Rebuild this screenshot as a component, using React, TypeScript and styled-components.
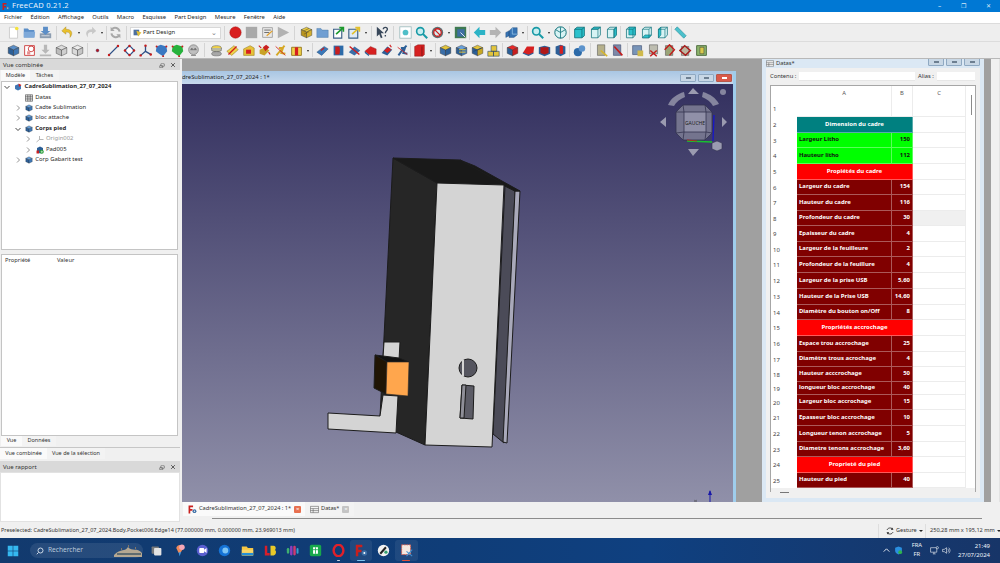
import React from "react";
import styled, { createGlobalStyle } from "styled-components";

const Global = createGlobalStyle`
  html, body { margin: 0; padding: 0; background: #f0f0f0; overflow: hidden; }
  * { box-sizing: border-box; }
  #root { width: 1000px; height: 563px; font-family: "Noto Sans", "Open Sans", sans-serif; }
`;

const Page = styled.div`
  width: 1000px; height: 563px; display: flex; flex-direction: column; overflow: hidden;
  background: #f0f0f0; color: #222; font-size: 6.4px; line-height: 1;
`;
const TitleBar = styled.div`
  height: 12px; background: #0078d4; color: #e8f2fb; display: flex; align-items: center; padding-left: 2px;
  font-size: 7.6px; letter-spacing: .2px; gap: 2px;
`;
const TitleLogo = styled.div`
  width: 8px; height: 9px; flex: none;
  svg { width: 8px; height: 9px; display: block; }
`;
const WinButtons = styled.div`
  margin-left: auto; display: flex; color: #d5e8f7; width: 62px; justify-content: space-between; padding-right: 9px;
  align-items: center; font-size: 6.4px;
`;
const MenuBar = styled.div`
  height: 11px; background: #fff; display: flex; align-items: center; gap: 8.4px; padding-left: 4px; font-size: 5.85px; color: #1e1e1e;
`;
const ToolRow = styled.div<{ $bottom?: boolean }>`
  height: 18px; display: flex; align-items: center; padding-left: 5px; background: #eeeeee;
  border-top: 1px solid #dcdcdc; ${p => p.$bottom ? "border-bottom: 1px solid #b8b8b8;" : ""}
`;
const ToolSlot = styled.div`
  width: 16px; height: 16px; display: flex; align-items: center; justify-content: center; flex: none;
  svg { width: 13px; height: 13px; display: block; }
`;
const ToolSep = styled.div<{ $w: number }>`
  width: ${p => p.$w}px; height: 14px; flex: none; display: flex; justify-content: center;
  &::after { content: ""; width: 1px; height: 100%; background: #d4d4d4; }
`;
const ToolArrow = styled.div`
  width: 7px; flex: none; display: flex; justify-content: center;
  &::after { content: ""; border: 1.8px solid transparent; border-top: 2.2px solid #222; margin-top: 2px; }
`;
const Combo = styled.div`
  width: 91px; height: 12px; flex: none; background: #fff; border: 1px solid #d8d8d8; display: flex; align-items: center;
  padding: 0 3px 0 2px; gap: 1px; font-size: 5.9px; color: #222;
  svg { width: 9px; height: 9px; }
  span:last-child { margin-left: auto; color: #777; font-size: 7px; }
`;
const Main = styled.div`
  height: 465px; display: flex;
`;
const Dock = styled.div`
  width: 182px; flex: none; display: flex; flex-direction: column; padding-right: 2px; background: #f0f0f0;
`;
const DockHeader = styled.div`
  height: 11px; flex: none; background: #d9d9d9; display: flex; align-items: center; justify-content: space-between; padding: 0 3px 0 3px;
  font-size: 6px; color: #333;
  svg { width: 6px; height: 6px; }
`;
const HeaderTools = styled.div`
  display: flex; gap: 5px; align-items: center; padding-right: 1px;
`;
const TabStrip = styled.div<{ $h: number; $mt?: number; $line?: boolean }>`
  height: ${p => p.$h}px; flex: none; display: flex; padding-left: ${p => p.$line ? 0 : 1}px; margin-top: ${p => p.$mt ?? 0}px;
  ${p => p.$line ? "border-top: 1px solid #c6c6c6;" : ""}
`;
const DockTab = styled.div<{ $w: number; $active?: boolean }>`
  width: ${p => p.$w}px; display: flex; align-items: center; justify-content: center; font-size: 5.5px; color: #333;
  background: ${p => p.$active ? "#fafafa" : "#f3f3f3"};
`;
const TreeBox = styled.div`
  height: 169px; flex: none; margin: 0 2px 0 1px; background: #fff; border: 1px solid #c4c4c4;
`;
const TreeRow = styled.div<{ $level: number; $strong?: boolean; $dim?: boolean }>`
  height: 10.4px; display: flex; align-items: center; padding-left: ${p => 1 + p.$level * 10.7}px; font-size: 5.9px; gap: 2.3px;
  font-weight: ${p => p.$strong ? 700 : 400}; color: ${p => p.$dim ? "#999" : "#2a2a2a"};
  svg { width: 8px; height: 8px; flex: none; }
`;
const Chevron = styled.div`
  width: 8px; height: 8px; flex: none; margin-right: 1px;
  svg { width: 8px; height: 8px; }
`;
const PropBox = styled.div`
  height: 182px; flex: none; margin: 4px 2px 0 1px; background: #fff; border: 1px solid #c4c4c4;
`;
const PropHead = styled.div`
  height: 12px; display: flex; align-items: center; font-size: 5.8px; color: #333;
  span:first-child { width: 55px; padding-left: 3px; }
`;
const ReportBox = styled.div`
  height: 50px; flex: none; background: #fff; border: 1px solid #e2e2e2;
`;
const Center = styled.div`
  flex: 1; min-width: 0; display: flex; flex-direction: column;
`;
const MdiRow = styled.div`
  height: 443px; flex: none; display: flex;
`;
const Mdi = styled.div`
  width: 809px; flex: none; background: #a0a0a0; display: flex; gap: 26px; overflow: hidden;
`;
const SideStrip = styled.div`
  flex: 1; background: #f0f0f0; border-right: 1px solid #e2e2e2;
`;
const ViewWindow = styled.div`
  width: 554px; flex: none; margin-top: 12px; display: flex; flex-direction: column; border-right: 3px solid #9fcdec; background: #b9d4ec;
`;
const ViewTitle = styled.div`
  height: 13px; flex: none; display: flex; align-items: center; font-size: 5.85px; color: #222; overflow: hidden; white-space: nowrap;
  background: linear-gradient(#a9c6e3, #c7d9ec);
`;
const ClippedName = styled.div`
  width: 100px; overflow: hidden; flex: none;
  span { display: block; margin-left: -7px; }
`;
const ViewTitleButtons = styled.div`
  margin-left: auto; display: flex; gap: 2px; padding-right: 1px;
`;
const CapButton = styled.div<{ $close?: boolean }>`
  width: 16px; height: 8px; border-radius: 1px; border: 1px solid ${p => p.$close ? "#b5574a" : "#8fa9c2"};
  background: ${p => p.$close ? "#d9594a" : "#c8d7e5"}; display: flex; align-items: center; justify-content: center;
  &::after { content: ""; width: 5px; height: 2px; background: ${p => p.$close ? "#fff" : "#6d7f91"}; }
`;
const Viewport = styled.div`
  flex: 1; min-height: 0; background: linear-gradient(#33305f, #9090a9);
  svg { display: block; width: 551px; height: 418px; }
`;
const SheetWindow = styled.div`
  width: 222px; flex: none; display: flex; flex-direction: column; background: #dbe8f4; padding: 0 4px 4px 4px;
`;
const SheetTitle = styled.div`
  height: 9px; flex: none; display: flex; align-items: center; font-size: 5.8px; gap: 2px; color: #333;
  svg { width: 8px; height: 7px; }
`;
const SheetCaps = styled.div`
  margin-left: auto; display: flex; gap: 2px; margin-top: -4px;
`;
const SheetBody = styled.div`
  flex: 1; min-height: 0; background: #f0f0f0; padding: 0 0 6px 4px; display: flex; flex-direction: column; width: 214px;
`;
const FormRow = styled.div`
  height: 17px; flex: none; display: flex; align-items: center; font-size: 5.8px; color: #333;
`;
const FormLabel = styled.div<{ $w: number; $pl?: number }>`
  width: ${p => p.$w}px; flex: none; padding-left: ${p => p.$pl ?? 0}px;
`;
const FormInput = styled.div<{ $w: number }>`
  width: ${p => p.$w}px; height: 9px; flex: none; background: #fff; border-bottom: 1px solid #e6e6e6;
`;
const Sheet = styled.div`
  flex: 1; min-height: 0; width: 206px; background: #fff; border: 1px solid #a6a6a6; position: relative; display: flex; flex-direction: column;
`;
const SheetRow = styled.div<{ $h: number }>`
  height: ${p => p.$h}px; flex: none; display: flex;
`;
const RowNum = styled.div`
  width: 26px; flex: none; display: flex; align-items: center; padding-left: 2px; font-size: 6px; color: #444; background: #fff;
`;
const ColHead = styled.div<{ $w: number }>`
  width: ${p => p.$w}px; flex: none; display: flex; align-items: center; justify-content: center; font-size: 5.8px; color: #555; border-right: 1px solid #ececec;
`;
const Cell = styled.div<{ $w: number; $bg?: string; $fg?: string; $align?: string }>`
  width: ${p => p.$w}px; flex: none; background: ${p => p.$bg ?? "#fff"}; color: ${p => p.$fg ?? "#fff"};
  display: flex; align-items: center; justify-content: ${p => p.$align ?? "flex-start"};
  padding: 0 2px; font-size: 5.95px; font-weight: 700; white-space: nowrap; overflow: hidden;
  border-right: 1px solid ${p => p.$bg ? "rgba(255,255,255,.35)" : "#ececec"};
  border-bottom: 1px solid ${p => p.$bg ? "rgba(255,255,255,.35)" : "#ececec"};
`;
const CurrentCell = styled(Cell)`
  background: #f0f0f0;
`;
const VScroll = styled.div`
  position: absolute; right: 3px; top: 9px; width: 1.5px; height: 20px; background: #8a8a8a;
`;
const HScroll = styled.div`
  margin-top: auto; height: 8px; flex: none; background: #f0f0f0; display: flex; align-items: center; padding-left: 9px;
  &::after { content: ""; width: 9px; height: 1px; background: #777; }
`;
const TabBar = styled.div`
  height: 14px; flex: none; display: flex; align-items: stretch; padding-left: 1px; background: #f0f0f0;
`;
const DocTab = styled.div<{ $w: number; $active?: boolean }>`
  width: ${p => p.$w}px; display: flex; align-items: center; gap: 2px; padding-left: 5px; font-size: 5.7px; color: #333; white-space: nowrap;
  background: ${p => p.$active ? "#fafafa" : "#f3f3f3"};
  svg { width: 9px; height: 9px; flex: none; }
`;
const TabClose = styled.div<{ $red?: boolean }>`
  width: 7px; height: 7px; flex: none; border-radius: 1px; background: ${p => p.$red ? "#e8704f" : "#c4c4c4"}; color: #fff; font-size: 6px;
  display: flex; align-items: center; justify-content: center; margin-left: 1px;
`;
const ScrollLineWrap = styled.div`
  height: 8px; flex: none; padding: 2px 18px 0 30px;
  &::after { content: ""; display: block; height: 1px; background: #8c8c8c; }
`;
const StatusBar = styled.div`
  height: 14px; flex: none; display: flex; align-items: center; padding-left: 1px; font-size: 5.45px; color: #333; white-space: nowrap;
`;
const StatusMessage = styled.div`
  width: 877px; flex: none;
`;
const StatusSection = styled.div<{ $w: number; $pl: number }>`
  width: ${p => p.$w}px; height: 100%; flex: none; display: flex; align-items: center; gap: 2px; padding-left: ${p => p.$pl}px; border-left: 1px solid #dedede;
  font-size: 5.6px;
  svg { width: 8px; height: 8px; }
  &::after { content: ""; border: 2px solid transparent; border-top: 2.4px solid #222; margin-top: 2px; }
`;
const TaskBar = styled.div`
  height: 25px; flex: none; display: flex; align-items: center; color: #fff;
  background: linear-gradient(90deg, #123a6e 0%, #0f3d78 45%, #0f4080 65%, #143a72 85%, #173568 100%);
`;
const StartSlot = styled.div`
  width: 30px; flex: none; display: flex; justify-content: center; padding-right: 4px;
  svg { width: 12px; height: 12px; }
`;
const SearchBox = styled.div`
  width: 113px; height: 15px; flex: none; border-radius: 8px; background: rgba(255,255,255,.09); display: flex; align-items: center;
  padding-left: 6px; gap: 4px; color: #b9c8da; font-size: 6.6px;
  svg:first-child { width: 8px; height: 8px; }
  svg:last-child { width: 30px; height: 13px; margin-left: auto; }
`;
const TaskSlot = styled.div<{ $active?: boolean; $dot?: string }>`
  width: 22.7px; height: 21px; flex: none; display: flex; align-items: center; justify-content: center; position: relative; border-radius: 3px;
  background: ${p => p.$active ? "rgba(255,255,255,.07)" : "transparent"};
  svg { width: 13px; height: 13px; }
  ${p => p.$dot ? `&::after { content: ""; position: absolute; bottom: 0; width: ${p.$active ? 8 : 3}px; height: 1.5px; background: ${p.$dot}; border-radius: 1px; }` : ""}
`;
const TaskIcons = styled.div`
  display: flex; margin-left: 2.5px; align-items: center;
`;
const Tray = styled.div`
  margin-left: auto; display: flex; align-items: center; padding-right: 10px; font-size: 6.2px; color: #eef3f9;
  svg { width: 9px; height: 9px; }
`;
const TrayIcons = styled.div`
  display: flex; align-items: center; gap: 3px;
`;
const Lang = styled.div`
  display: flex; flex-direction: column; align-items: center; gap: 2.5px; margin: 0 8px 0 9px; font-size: 5.8px;
`;
const Clock = styled.div`
  display: flex; flex-direction: column; align-items: flex-end; gap: 2.5px; margin-left: 7px; font-size: 6px;
`;

const Iso = ({ t, l, r, extra }: { t: string; l: string; r: string; extra?: React.ReactNode }) => (
  <svg viewBox="0 0 16 16">
    <path d="M8 1.5 14.5 4.5 8 7.5 1.5 4.5Z" fill={t} stroke="#2b2b2b" strokeWidth=".5" />
    <path d="M1.5 4.5 8 7.5V14.5L1.5 11.5Z" fill={l} stroke="#2b2b2b" strokeWidth=".5" />
    <path d="M14.5 4.5 8 7.5V14.5L14.5 11.5Z" fill={r} stroke="#2b2b2b" strokeWidth=".5" />
    {extra}
  </svg>
);
const Y = ["#f0d24a", "#c9a227", "#e6c23a"] as const;
const B = ["#5a8fc8", "#2c5f97", "#3f77b4"] as const;
const redMark = <path d="M3 13 13 3" stroke="#d01c1c" strokeWidth="1.6" />;
const cyanFace = (d: string) => (
  <svg viewBox="0 0 16 16">
    <path d="M3 4 6 1.5H14V11L11 14.5H3Z" fill="#d7f3f4" stroke="#0d6f78" strokeWidth=".9" />
    <path d={d} fill="#2cc1cc" stroke="#0d6f78" strokeWidth=".7" />
    <path d="M3 4H11V14.5M11 4 14 1.5" fill="none" stroke="#0d6f78" strokeWidth=".8" />
  </svg>
);
const Lens = ({ hue }: { hue: string }) => (
  <svg viewBox="0 0 16 16"><circle cx="6.5" cy="6.5" r="4.5" fill="#c9eef0" stroke={hue} strokeWidth="2" /><path d="M10 10 15 15" stroke={hue} strokeWidth="2.6" /></svg>
);

const icons: Record<string, React.ReactNode> = {
  doc: <svg viewBox="0 0 16 16"><path d="M3 1.5H10L13 4.5V15H3Z" fill="#fff" stroke="#c5c5c5" /><circle cx="12" cy="3" r="2.2" fill="#f4e23c" /></svg>,
  open: <svg viewBox="0 0 16 16"><path d="M1 3H6L7.5 5H14V14H1Z" fill="#5b8ec7" /><path d="M1 7H15L14 14H1Z" fill="#7ea9d9" /></svg>,
  save: <svg viewBox="0 0 16 16"><path d="M1 9H15V15H1Z" fill="#8c9db0" /><path d="M5 1H11V6H14L8 11 2 6H5Z" fill="#5b8ec7" /><path d="M3 12H13" stroke="#dce4ec" /></svg>,
  undo: <svg viewBox="0 0 16 16"><path d="M6 1 1 6 6 10V7.5C10 7.5 12 9 11 14 15 10 14 4 6 4Z" fill="#e9c02c" stroke="#a5821a" strokeWidth=".5" /></svg>,
  redo: <svg viewBox="0 0 16 16"><path d="M10 1 15 6 10 10V7.5C6 7.5 4 9 5 14 1 10 2 4 10 4Z" fill="#c8c8c8" /></svg>,
  refresh: <svg viewBox="0 0 16 16"><path d="M13 7A5.5 5.5 0 0 0 3.5 4M3 9A5.5 5.5 0 0 0 12.5 12" fill="none" stroke="#a8a8a8" strokeWidth="2.4" /><path d="M2 1V6H7ZM14 15V10H9Z" fill="#a8a8a8" /></svg>,
  rec: <svg viewBox="0 0 16 16"><circle cx="8" cy="8" r="7" fill="#d81e1e" stroke="#a51414" strokeWidth=".6" /></svg>,
  stop: <svg viewBox="0 0 16 16"><rect x="1" y="1" width="14" height="14" fill="#a9a9a9" /></svg>,
  macro: <svg viewBox="0 0 16 16"><path d="M2 2H14V14H2Z" fill="#e8e8e8" stroke="#9a9a9a" /><path d="M4 5H12M4 8H10" stroke="#555" /><path d="M7 12 14 6" stroke="#e2a12c" strokeWidth="1.6" /></svg>,
  play: <svg viewBox="0 0 16 16"><path d="M1 1 15 8 1 15Z" fill="#b2b2b2" /></svg>,
  part: <Iso t="#e7cb45" l="#b8941f" r="#d4af2c" extra={<path d="M5 6 11 3M5 10 11 7" stroke="#6a5410" strokeWidth=".7" />} />,
  folderBlue: <svg viewBox="0 0 16 16"><path d="M1 3H6L7.5 5H15V14H1Z" fill="#6f9ed2" stroke="#44719f" strokeWidth=".5" /></svg>,
  link: <svg viewBox="0 0 16 16"><path d="M2 4H12V15H2Z" fill="#fff" stroke="#3a5f86" strokeWidth="1.4" /><path d="M5 10 13 3M9 2H14V7" fill="none" stroke="#1d9a2e" strokeWidth="2" /></svg>,
  link2: <svg viewBox="0 0 16 16"><path d="M1 4H12V15H1Z" fill="#dfeaf5" stroke="#3a5f86" strokeWidth="1.4" /><path d="M5 10 13 3M9 2H14V7" fill="none" stroke="#e2c02c" strokeWidth="2" /></svg>,
  help: <svg viewBox="0 0 16 16"><path d="M1 1V13L4 10 6 15 8 14 6 9H10Z" fill="#39485a" /><path d="M9 4C9 1 14 1 14 4 14 6 11.5 6 11.5 9M11.5 11V13" fill="none" stroke="#39485a" strokeWidth="1.7" /></svg>,
  fit: <svg viewBox="0 0 16 16"><rect x="1" y="1" width="14" height="14" fill="#fff" stroke="#9bbabd" /><circle cx="8" cy="8" r="3.5" fill="#4fbfc8" /></svg>,
  lens: <Lens hue="#189aa6" />,
  nodraw: <svg viewBox="0 0 16 16"><circle cx="8" cy="8" r="7" fill="#5f6f72" /><circle cx="8" cy="8" r="4.6" fill="#d4eef0" stroke="#d01c1c" strokeWidth="1.6" /><path d="M4.5 4.5 11.5 11.5" stroke="#d01c1c" strokeWidth="1.6" /></svg>,
  boxview: <svg viewBox="0 0 16 16"><rect x="1" y="1" width="14" height="14" fill="#3f7a52" /><rect x="4" y="4" width="9" height="9" fill="#3d6fa3" /><path d="M8 8 14 14" stroke="#fff" /></svg>,
  back: <svg viewBox="0 0 16 16"><path d="M8 1 1 8 8 15V11H15V5H8Z" fill="#2bb3c6" /></svg>,
  fwd: <svg viewBox="0 0 16 16"><path d="M8 1 15 8 8 15V11H1V5H8Z" fill="#b4b4b4" /></svg>,
  views: <svg viewBox="0 0 16 16"><path d="M1 14V8L5 6V12ZM5 6 9 2H15V11L11 14H5Z" fill="#3673b3" stroke="#1f4775" strokeWidth=".5" /><path d="M9 2V10H15" fill="none" stroke="#a9d3f0" strokeWidth=".8" /></svg>,
  iso: <svg viewBox="0 0 16 16"><circle cx="8" cy="8" r="7" fill="#d7f3f4" stroke="#0d6f78" strokeWidth="1.2" /><path d="M8 8V15M8 8 2 4.5M8 8 14 4.5M8 1.5V8" stroke="#0d6f78" /></svg>,
  vFront: <svg viewBox="0 0 16 16"><path d="M2 4 5 1.5H14V12L11 14.5H2Z" fill="#2cc1cc" stroke="#0d6f78" /><path d="M2 4H11V14.5M11 4 14 1.5" fill="none" stroke="#0d6f78" /></svg>,
  vTop: cyanFace("M3 4 6 1.5H14L11 4Z"),
  vRight: cyanFace("M11 4 14 1.5V11L11 14.5Z"),
  vRear: cyanFace("M6 1.5H14V11H6Z"),
  vBottom: cyanFace("M3 14.5 6 11H14L11 14.5Z"),
  vLeft: cyanFace("M3 4 6 1.5V11L3 14.5Z"),
  measure: <svg viewBox="0 0 16 16"><path d="M1 4 4 1 15 12 12 15Z" fill="#4cc0cc" stroke="#10808c" strokeWidth=".6" /></svg>,
  body: <Iso t={B[0]} l={B[1]} r={B[2]} />,
  sketch: <svg viewBox="0 0 16 16"><path d="M2 2H14V14H2Z" fill="#fff" stroke="#c82828" /><circle cx="10" cy="6" r="3.5" fill="none" stroke="#c82828" /><path d="M5 9H9V13H5Z" fill="#e79090" /></svg>,
  grey1: <svg viewBox="0 0 16 16"><path d="M6 1H10V7H13L8 12 3 7H6ZM1 13H15V15H1Z" fill="#b8b8b8" /></svg>,
  grey2: <Iso t="#dcdcdc" l="#bcbcbc" r="#cfcfcf" />,
  grey3: <Iso t="#ececec" l="#dadada" r="#c6c6c6" />,
  point: <svg viewBox="0 0 16 16"><circle cx="8" cy="8" r="1.8" fill="#b5121b" stroke="#3c3c70" strokeWidth=".5" /></svg>,
  line: <svg viewBox="0 0 16 16"><path d="M2 14 14 2" stroke="#2d4f86" strokeWidth="1.7" /><circle cx="2.5" cy="13.5" r="1.5" fill="#c41c1c" /><circle cx="13.5" cy="2.5" r="1.5" fill="#c41c1c" /></svg>,
  rect: <svg viewBox="0 0 16 16"><path d="M8 2 14 8 8 14 2 8Z" fill="#fff" stroke="#2d4f86" strokeWidth="1.5" /><g fill="#c41c1c"><circle cx="8" cy="2.5" r="1.5" /><circle cx="13.5" cy="8" r="1.5" /><circle cx="8" cy="13.5" r="1.5" /><circle cx="2.5" cy="8" r="1.5" /></g></svg>,
  axes: <svg viewBox="0 0 16 16"><path d="M8 9V2M8 9 2 14M8 9 15 13" stroke="#2d4f86" strokeWidth="1.6" fill="none" /><g fill="#c41c1c"><circle cx="8" cy="2" r="1.5" /><circle cx="2" cy="14" r="1.5" /><circle cx="14.5" cy="13" r="1.5" /></g></svg>,
  blob: <svg viewBox="0 0 16 16"><path d="M2 3 7 1 14 3 15 9 10 15 5 12 1 9Z" fill="#3a78c2" /><g fill="#c41c1c"><circle cx="2" cy="3" r="1.2" /><circle cx="14" cy="3" r="1.2" /><circle cx="10" cy="15" r="1.2" /></g></svg>,
  blobG: <svg viewBox="0 0 16 16"><path d="M2 3 7 1 14 3 15 9 10 15 5 12 1 9Z" fill="#27b23c" /><g fill="#c41c1c"><circle cx="2" cy="3" r="1.2" /><circle cx="14" cy="3" r="1.2" /><circle cx="10" cy="15" r="1.2" /></g></svg>,
  face: <svg viewBox="0 0 16 16"><circle cx="8" cy="7" r="6" fill="#bfbfbf" stroke="#8a8a8a" /><path d="M4 7H12M5 14H11" stroke="#6c6c6c" /><circle cx="6" cy="6" r="1" fill="#666" /><circle cx="10" cy="6" r="1" fill="#666" /></svg>,
  y1: <svg viewBox="0 0 16 16"><ellipse cx="8" cy="5" rx="6" ry="3" fill={Y[0]} stroke="#555" strokeWidth=".6" /><path d="M2 5V8C4 10 12 10 14 8V5" fill="#b8b8a0" stroke="#555" strokeWidth=".6" /><ellipse cx="8" cy="12" rx="6" ry="2.6" fill="#a8a8a8" stroke="#555" strokeWidth=".6" /></svg>,
  y2: <svg viewBox="0 0 16 16"><path d="M1 9 10 2 15 7 7 14Z" fill={Y[0]} stroke="#8a6d10" strokeWidth=".6" />{redMark}</svg>,
  y3: <svg viewBox="0 0 16 16"><path d="M2 6 10 2 15 5V14H2Z" fill={Y[2]} stroke="#8a6d10" strokeWidth=".6" /><path d="M5 7H11V12H5Z" fill="#d62020" /></svg>,
  y4: <svg viewBox="0 0 16 16"><path d="M2 7 9 4 14 8 8 14 2 12Z" fill={Y[1]} /><path d="M6 4 10 1 14 4 9 9Z" fill="#c92020" /><path d="M1 2 4 5M13 10 15 13" stroke="#d01c1c" strokeWidth="1.3" /></svg>,
  y5: <svg viewBox="0 0 16 16"><path d="M3 14 8 8 13 2M6 5 11 5 9 11 14 12" fill="none" stroke="#d6a826" strokeWidth="2.4" /><path d="M2 3 14 14" stroke="#d01c1c" /></svg>,
  y6: <svg viewBox="0 0 16 16"><path d="M2 4H14V14H2Z" fill="#f0d24a" stroke="#8a6d10" /><path d="M6 4H10V14H6Z" fill="#d62020" /></svg>,
  bluePlate: <svg viewBox="0 0 16 16"><path d="M1 10 10 3 15 6 7 14Z" fill="#3a78b8" stroke="#23456e" strokeWidth=".5" /><path d="M6 8 10 5" stroke="#d01c1c" strokeWidth="1.6" /></svg>,
  blueCut: <svg viewBox="0 0 16 16"><path d="M2 2H14V14H2Z" fill="#2c6aa8" /><path d="M4 3H9C10 6 10 10 9 13H4Z" fill="#c81e1e" /></svg>,
  blueRed: <svg viewBox="0 0 16 16"><path d="M1 10 8 3 15 8 8 14Z" fill="#3a6ea8" /><path d="M2 3 14 13" stroke="#d01c1c" strokeWidth="1.7" /></svg>,
  redCut: <svg viewBox="0 0 16 16"><path d="M1 9 8 3 15 6V13H6Z" fill="#d62020" stroke="#7a1212" strokeWidth=".4" /><path d="M1 9 6 13V15L1 11Z" fill="#2c5f97" /></svg>,
  redCut2: <svg viewBox="0 0 16 16"><path d="M2 11 9 3 15 7 9 14Z" fill="#2c5f97" /><path d="M5 8 10 4 14 7 9 11Z" fill="#d62020" /><path d="M12 1 14 4" stroke="#d01c1c" strokeWidth="1.4" /></svg>,
  redBlue: <svg viewBox="0 0 16 16"><path d="M3 14 8 7 13 2M6 5 11 5 9 11 14 12" fill="none" stroke="#2c5f97" strokeWidth="2.4" /><path d="M2 4 14 13" stroke="#d01c1c" /></svg>,
  redFront: <svg viewBox="0 0 16 16"><path d="M2 3 6 1H14V13L12 15H2Z" fill="#d62020" stroke="#7a1212" strokeWidth=".5" /><path d="M11 3V15" stroke="#7a1212" /></svg>,
  yb1: <Iso t="#e2c43c" l="#3a6ea8" r="#2c5f97" />,
  yb2: <Iso t="#6aa0d8" l="#2c5f97" r="#3f77b4" extra={<path d="M5 7H13M5 10H13" stroke="#e2c43c" strokeWidth="1.2" />} />,
  yb3: <Iso t="#e2c43c" l="#2c5f97" r="#c8a824" extra={<path d="M3 9 13 5" stroke="#23456e" />} />,
  yb4: <svg viewBox="0 0 16 16"><path d="M1 9H8V15H1ZM8 9H15V15H8ZM5 2H12V9H5Z" fill="#e2c43c" stroke="#23456e" strokeWidth=".7" /></svg>,
  r1: <Iso t="#e82a2a" l="#2c5f97" r="#c81e1e" />,
  r2: <svg viewBox="0 0 16 16"><path d="M1 11 6 3 15 3 14 11 8 14Z" fill="#d62020" /><path d="M1 11 8 14 14 11" fill="none" stroke="#2c5f97" strokeWidth="1.4" /></svg>,
  r3: <svg viewBox="0 0 16 16"><path d="M1 4 8 2 15 4V12L8 15 1 12Z" fill="#2c5f97" /><path d="M3 4H13V11L8 13 3 11Z" fill="#b01818" /></svg>,
  r4: <svg viewBox="0 0 16 16"><path d="M2 3 8 1 14 3V12L8 15 2 12Z" fill="#2c5f97" /><path d="M7 2H11V12H7Z" fill="#d62020" /></svg>,
  sphere: <svg viewBox="0 0 16 16"><circle cx="6" cy="10" r="5" fill="#2c6aa8" /><circle cx="11" cy="5.5" r="4" fill="#5c93cc" /></svg>,
  g1: <svg viewBox="0 0 16 16"><path d="M3 1H12V14H3Z" fill="#b5b08c" stroke="#555" strokeWidth=".7" /><path d="M7 8 15 15" stroke="#d6b52a" strokeWidth="2" /></svg>,
  g2: <svg viewBox="0 0 16 16"><path d="M3 1H12V14H3Z" fill="#7d88a8" stroke="#35456a" strokeWidth=".7" /><path d="M4 3 14 14" stroke="#c21c1c" strokeWidth="2" /></svg>,
  g3: <svg viewBox="0 0 16 16"><path d="M2 2H13V13H2Z" fill="#7894b8" stroke="#35456a" strokeWidth=".7" /><path d="M8 8H15V15H8Z" fill="#cfb94c" /></svg>,
  g4: <svg viewBox="0 0 16 16"><path d="M3 1H13V12H3Z" fill="#bdbdb0" stroke="#555" strokeWidth=".7" /><path d="M4 8 12 15M12 8 4 15" stroke="#c21c1c" strokeWidth="1.8" /></svg>,
  g5: <svg viewBox="0 0 16 16"><path d="M3 2H12V14H3Z" fill="#9aa478" stroke="#555" strokeWidth=".7" /><path d="M2 7 8 1 14 7 8 14" fill="none" stroke="#c21c1c" strokeWidth="1.8" /></svg>,
  g6: <svg viewBox="0 0 16 16"><path d="M3 3H12V14H3Z" fill="#bdb6a0" stroke="#555" strokeWidth=".7" /><path d="M1 8 7 2 14 8 8 14Z" fill="none" stroke="#a81c1c" strokeWidth="1.8" /></svg>,
  g7: <svg viewBox="0 0 16 16"><path d="M2 2H14V14H2Z" fill="#8cb46c" stroke="#3c5c2c" /><path d="M6 4H11V12H6Z" fill="#d8c94c" stroke="#333" strokeWidth=".6" /></svg>,
};

const row1 = ["doc", "open", "save", "s6", "undo", "a", "redo", "a", "s2", "refresh", "s7", "combo", "s6", "rec", "stop", "macro", "play", "s7", "part", "folderBlue", "link", "link2", "a", "s5", "help", "s7", "fit", "lens", "nodraw", "a", "boxview", "s3", "back", "fwd", "views", "a", "s3", "lens", "a", "iso", "s3", "vFront", "vTop", "vRight", "s3", "vRear", "vBottom", "vLeft", "s2", "measure"];
const row2 = ["body", "sketch", "grey1", "grey2", "grey3", "s4", "point", "line", "rect", "axes", "blob", "blobG", "face", "s7", "y1", "y2", "y3", "y4", "y5", "y6", "a", "s3", "bluePlate", "blueCut", "blueRed", "redCut", "redCut2", "redBlue", "s1", "redFront", "a", "s3", "yb1", "yb2", "yb3", "yb4", "s3", "r1", "r2", "r3", "r4", "s3", "sphere", "s6", "g1", "g2", "s4", "g3", "g4", "g5", "g6", "g7"];

const PartDesignMark = () => (
  <svg viewBox="0 0 16 16"><path d="M1 3H11V13H1Z" fill="#4d6f9e" /><path d="M6 5 15 8 9 15Z" fill="#e0be34" /></svg>
);

const Toolbar = ({ items, bottom }: { items: string[]; bottom?: boolean }) => (
  <ToolRow $bottom={bottom}>
    {items.map((it, i) => {
      if (it === "a") return <ToolArrow key={i} />;
      if (it === "combo") return <Combo key={i}><PartDesignMark /><span>Part Design</span><span>⌄</span></Combo>;
      if (/^s\d$/.test(it)) return <ToolSep key={i} $w={Number(it[1])} />;
      return <ToolSlot key={i}>{icons[it]}</ToolSlot>;
    })}
  </ToolRow>
);

const FcLogo = () => (
  <svg viewBox="0 0 16 16"><path d="M1 1H9V4H4V7H8V10H4V15H1Z" fill="#c8201e" /><circle cx="11.5" cy="11" r="3.4" fill="#3c6ea5" /><circle cx="11.5" cy="11" r="1.2" fill="#fff" /></svg>
);
const ChevRight = () => <Chevron><svg viewBox="0 0 8 8"><path d="M3 1.5 5.5 4 3 6.5" fill="none" stroke="#777" strokeWidth=".8" /></svg></Chevron>;
const ChevDown = () => <Chevron><svg viewBox="0 0 8 8"><path d="M1.5 3 4 5.5 6.5 3" fill="none" stroke="#333" strokeWidth=".9" /></svg></Chevron>;
const NoChev = () => <Chevron />;
const BodyIcon = () => <Iso t="#6aa0d8" l="#2c5f97" r="#3f77b4" />;
const GridIcon = () => <svg viewBox="0 0 10 9"><path d="M.5.5H9.5V8.5H.5ZM.5 3H9.5M.5 5.7H9.5M3.5.5V8.5M6.5.5V8.5" fill="#eee" stroke="#333" strokeWidth=".7" /></svg>;

const tree = [
  { level: 0, chev: "d", label: "CadreSublimation_27_07_2024", strong: true, icon: <svg viewBox="0 0 16 16"><path d="M2 5 9 2 14 5V12L8 15 2 12Z" fill="#3f77b4" /><path d="M9 1 15 4 10 8Z" fill="#d62020" /></svg> },
  { level: 1, chev: "", label: "Datas", icon: <GridIcon /> },
  { level: 1, chev: "r", label: "Cadte Sublimation", icon: <BodyIcon /> },
  { level: 1, chev: "r", label: "bloc attache", icon: <BodyIcon /> },
  { level: 1, chev: "d", label: "Corps pied", strong: true, icon: <BodyIcon /> },
  { level: 2, chev: "r", label: "Origin002", dim: true, icon: <svg viewBox="0 0 16 16"><path d="M7 2V9M7 9 1 14M7 9H15" stroke="#999" strokeWidth="1.4" fill="none" /></svg> },
  { level: 2, chev: "r", label: "Pad005", icon: <svg viewBox="0 0 16 16"><path d="M2 4 8 1 14 4V12L8 15 2 12Z" fill="#2c5f97" /><path d="M1 9H6V15H1Z" fill="#c92020" /><circle cx="11.5" cy="11.5" r="4" fill="#1d9a2e" /><path d="M11.5 9V14M9 11.5H14" stroke="#fff" /></svg> },
  { level: 1, chev: "r", label: "Corp Gabarit test", icon: <BodyIcon /> },
];

type RowData = { h: number; kind?: "head" | "green" | "dark"; label?: string; value?: string; sel?: boolean };
const rows: RowData[] = [
  { h: 16 },
  { h: 16, kind: "head", label: "Dimension du cadre", value: "#008080" },
  { h: 15, kind: "green", label: "Largeur Litho", value: "150" },
  { h: 16, kind: "green", label: "Hauteur litho", value: "112" },
  { h: 16, kind: "head", label: "Propiétés du cadre", value: "#ff0000" },
  { h: 15, kind: "dark", label: "Largeur du cadre", value: "154" },
  { h: 16, kind: "dark", label: "Hauteur du cadre", value: "116" },
  { h: 15, kind: "dark", label: "Profondeur du cadre", value: "30", sel: true },
  { h: 16, kind: "dark", label: "Epaisseur du cadre", value: "4" },
  { h: 15, kind: "dark", label: "Largeur de la feuilleure", value: "2" },
  { h: 16, kind: "dark", label: "Profondeur de la feuillure", value: "4" },
  { h: 16, kind: "dark", label: "Largeur de la prise USB", value: "5,60" },
  { h: 16, kind: "dark", label: "Hauteur de la Prise USB", value: "14,60" },
  { h: 15, kind: "dark", label: "Diamètre du bouton on/Off", value: "8" },
  { h: 16, kind: "head", label: "Propriétés  accrochage", value: "#ff0000" },
  { h: 16, kind: "dark", label: "Espace trou accrochage", value: "25" },
  { h: 15, kind: "dark", label: "Diamètre trous acrochage", value: "4" },
  { h: 15, kind: "dark", label: "Hauteur acccrochage", value: "50" },
  { h: 13, kind: "dark", label: "longueur bloc accrochage", value: "40" },
  { h: 15, kind: "dark", label: "Largeur bloc accrochage", value: "15" },
  { h: 16, kind: "dark", label: "Epasseur bloc accrochage", value: "10" },
  { h: 16, kind: "dark", label: "Longueur tenon accrochage", value: "5" },
  { h: 15, kind: "dark", label: "Diametre tenons accrochage", value: "3,60" },
  { h: 16, kind: "head", label: "Proprieté du pied", value: "#ff0000" },
  { h: 15, kind: "dark", label: "Hauteur du pied", value: "40" },
];

const Model = () => (
  <g stroke="#1c1c1c" strokeWidth="1" strokeLinejoin="round">
    <path d="M505 186 515 191 504 443 493 434Z" fill="#4b4b58" />
    <path d="M515 191 520 191 507 443 503 442Z" fill="#a9a9ba" />
    <path d="M460 160 475 166 520 191 515 191 505 186Z" fill="#191919" />
    <path d="M393 158 437 183 425 445 396 432 380 417Z" fill="#262626" />
    <path d="M393 158 460 160 505 185 437 183Z" fill="#191919" />
    <path d="M437 183 504 185 492 447 425 445Z" fill="#d4d4d4" />
    <circle cx="468" cy="368" r="9" fill="#55555f" />
    <path d="M463 360 463 376" stroke="#d4d4d4" strokeWidth="2" />
    <path d="M462 385 474 386 473 419 460 418Z" fill="#5c5c66" />
    <path d="M462 385 466 385 464 418 460 418Z" fill="#8f8f98" />
    <path d="M328 413 380 416 383 395 398 396 396 433 328 429Z" fill="#d4d4d4" />
    <path d="M384 342 400 342 399 360 383 358Z" fill="#d4d4d4" />
    <path d="M375 355 399 358 409 362 387 362Z" fill="#111" />
    <path d="M375 355 387 362 386 394 374 388Z" fill="#201505" />
    <path d="M387 362 409 362 408 396 386 394Z" fill="#ffa64d" stroke="#2a2a2a" strokeWidth=".6" />
  </g>
);
const NavCube = () => (
  <g>
    <g fill="#85859e">
      <path d="M693 88 688 94 699 94ZM660 122 666 117 666 127ZM727 122 722 117 722 127ZM693 156 688 149 699 149Z" fill="#9b9bb0" />
      <path d="M668 105C671 98 677 94 684 92L685 97C680 99 676 102 674 106Z" />
      <path d="M703 92C710 94 716 98 719 104L713 106C711 102 707 99 702 97Z" />
      <circle cx="723" cy="92" r="3" />
    </g>
    <path d="M683 105H705L712 112V133L705 140H683L676 133V112Z" fill="#74748e" stroke="#33334f" strokeWidth=".8" />
    <path d="M684 112H706V132H684Z" fill="#9090a8" stroke="#33334f" strokeWidth=".8" />
    <path d="M683 105 684 112M705 105 706 112M712 112 706 112M676 112 684 112M676 133 684 132M712 133 706 132M683 140 684 132M705 140 706 132" stroke="#33334f" strokeWidth=".8" />
    <text x="695" y="125" fontSize="5" textAnchor="middle" fill="#222" fontFamily="'Noto Sans', sans-serif">GAUCHE</text>
    <path d="M714 115 713 141" stroke="#1818c8" strokeWidth="1.3" />
    <path d="M687 141 712 142" stroke="#18c030" strokeWidth="1.3" />
    <path d="M687 140 697 141" stroke="#d01818" strokeWidth=".8" />
    <path d="M712 143 717 141 722 143V149L717 151 712 149Z" fill="#9a9ab0" stroke="#33334f" strokeWidth=".6" />
    <path d="M710 491V502" stroke="#1818a8" />
    <path d="M710 490 708 495H712Z" fill="#1818a8" />
    <path d="M694 500 697 502M697 500 694 502" stroke="#444" strokeWidth=".5" />
  </g>
);

const Spare = () => <svg viewBox="0 0 10 8"><path d="M.5.5H9.5V7.5H.5ZM.5 3H9.5M.5 5.2H9.5M3.5 3V7.5" fill="#f4f4f4" stroke="#555" strokeWidth=".6" /></svg>;
const PinIcon = () => <svg viewBox="0 0 8 8"><path d="M2.5 2.5H7V5.5H2.5ZM1 5H5V7.5H1Z" fill="#fff" stroke="#333" strokeWidth=".7" /></svg>;
const XIcon = () => <svg viewBox="0 0 8 8"><path d="M1.5 1.5 6.5 6.5M6.5 1.5 1.5 6.5" stroke="#333" strokeWidth="1" /></svg>;

const taskIcons: { node: React.ReactNode; active?: boolean; dot?: string }[] = [
  { node: <svg viewBox="0 0 16 16"><rect x="2" y="3" width="9" height="9" rx="1" fill="#7b7b7b" /><rect x="5" y="5" width="9" height="9" rx="1" fill="#e4e4e4" /></svg> },
  { node: <svg viewBox="0 0 16 16"><path d="M4 5C5 0 12 0 13 5L9 11H7Z" fill="#f08a5a" /><path d="M7 10H10L8 15Z" fill="#3f9be0" /><circle cx="11" cy="4" r="3.4" fill="#f6a7b8" /></svg> },
  { node: <svg viewBox="0 0 16 16"><circle cx="8" cy="8" r="7" fill="#5a5fd0" /><rect x="4" y="5" width="6" height="6" rx="1" fill="#fff" /><path d="M10 7 13 5V11L10 9Z" fill="#fff" /></svg> },
  { node: <svg viewBox="0 0 16 16"><circle cx="8" cy="8" r="7" fill="#1573d6" /><circle cx="9" cy="8" r="3.6" fill="#7ec4f4" /></svg> },
  { node: <svg viewBox="0 0 16 16"><path d="M1 3H7L8.5 5H15V14H1Z" fill="#f6c644" /><path d="M1 7H15V14H1Z" fill="#f9d668" /><path d="M1 11H15V14H1Z" fill="#2490d8" /></svg> },
  { node: <svg viewBox="0 0 16 16"><path d="M1 2H4V11H7V14H1Z" fill="#d81e2a" /><path d="M8 2H12C15 2 15 7 13 7.5 16 8 15 14 12 14H8Z" fill="#e8c928" /></svg> },
  { node: <svg viewBox="0 0 16 16"><rect x="1" y="5" width="3" height="7" rx="1.4" fill="#3fb070" /><rect x="5" y="2" width="3" height="12" rx="1.4" fill="#8c3fc0" /><rect x="9" y="2" width="3" height="12" rx="1.4" fill="#d03b70" /><rect x="13" y="5" width="2.4" height="7" rx="1.2" fill="#35a0d0" /></svg> },
  { node: <svg viewBox="0 0 16 16"><rect x="1" y="1" width="14" height="14" rx="2" fill="#18a84c" /><rect x="5" y="4" width="6" height="8" fill="#fff" /><path d="M5 7H11M8 4V12" stroke="#18a84c" /></svg> },
  { node: <svg viewBox="0 0 16 16"><ellipse cx="8" cy="8" rx="6" ry="7" fill="none" stroke="#e0202a" strokeWidth="3" /></svg>, dot: "#c8d4e0" },
  { node: <FcLogo />, active: true, dot: "#7dc4f0" },
  { node: <svg viewBox="0 0 16 16"><circle cx="8" cy="8" r="7" fill="#f2f2f2" /><path d="M4 12 11 4" stroke="#222" strokeWidth="2.4" /><circle cx="11" cy="10" r="2" fill="#35a070" /></svg> },
  { node: <svg viewBox="0 0 16 16"><rect x="2" y="1" width="11" height="12" fill="#f4e8e0" stroke="#e0503a" strokeDasharray="2 1" /><path d="M8 9 15 15M15 7 8 15" stroke="#3f8fd0" strokeWidth="1.3" /></svg>, active: true, dot: "#e0503a" },
];

export default function App() {
  return (
    <Page>
      <Global />
      <TitleBar>
        <TitleLogo><FcLogo /></TitleLogo>
        <span>FreeCAD 0.21.2</span>
        <WinButtons><span>–</span><span>❐</span><span>✕</span></WinButtons>
      </TitleBar>
      <MenuBar>
        {["Fichier", "Édition", "Affichage", "Outils", "Macro", "Esquisse", "Part Design", "Mesure", "Fenêtre", "Aide"].map(m => <span key={m}>{m}</span>)}
      </MenuBar>
      <Toolbar items={row1} />
      <Toolbar items={row2} bottom />
      <Main>
        <Dock>
          <DockHeader><span>Vue combinée</span><HeaderTools><PinIcon /><XIcon /></HeaderTools></DockHeader>
          <TabStrip $h={11}><DockTab $w={29} $active>Modèle</DockTab><DockTab $w={29}>Tâches</DockTab></TabStrip>
          <TreeBox>
            {tree.map(t => (
              <TreeRow key={t.label} $level={t.level} $strong={t.strong} $dim={t.dim}>
                {t.chev === "d" ? <ChevDown /> : t.chev === "r" ? <ChevRight /> : <NoChev />}
                {t.icon}
                <span>{t.label}</span>
              </TreeRow>
            ))}
          </TreeBox>
          <PropBox><PropHead><span>Propriété</span><span>Valeur</span></PropHead></PropBox>
          <TabStrip $h={10}><DockTab $w={21} $active>Vue</DockTab><DockTab $w={34}>Données</DockTab></TabStrip>
          <TabStrip $h={12} $mt={1} $line><DockTab $w={47} $active>Vue combinée</DockTab><DockTab $w={58}>Vue de la sélection</DockTab></TabStrip>
          <TabStrip $h={2} />
          <DockHeader><span>Vue rapport</span><HeaderTools><PinIcon /><XIcon /></HeaderTools></DockHeader>
          <ReportBox />
        </Dock>
        <Center>
          <MdiRow>
            <Mdi>
              <ViewWindow>
                <ViewTitle>
                  <ClippedName><span>CadreSublimation_27_07_2024 : 1*</span></ClippedName>
                  <ViewTitleButtons><CapButton /><CapButton /><CapButton $close /></ViewTitleButtons>
                </ViewTitle>
                <Viewport>
                  <svg viewBox="182 84 551 418"><Model /><NavCube /></svg>
                </Viewport>
              </ViewWindow>
              <SheetWindow>
                <SheetTitle>
                  <Spare /><span>Datas*</span>
                  <SheetCaps><CapButton /><CapButton /><CapButton /></SheetCaps>
                </SheetTitle>
                <SheetBody>
                  <FormRow>
                    <FormLabel $w={29}>Contenu :</FormLabel><FormInput $w={116} />
                    <FormLabel $w={22} $pl={3}>Alias :</FormLabel><FormInput $w={38} />
                  </FormRow>
                  <Sheet>
                    <SheetRow $h={15}>
                      <RowNum />
                      <ColHead $w={95}>A</ColHead><ColHead $w={21}>B</ColHead><ColHead $w={53}>C</ColHead>
                    </SheetRow>
                    {rows.map((r, i) => {
                      const n = i + 1;
                      if (r.kind === "head") {
                        return (
                          <SheetRow key={n} $h={r.h}>
                            <RowNum>{n}</RowNum>
                            <Cell $w={116} $bg={r.value} $align="center">{r.label}</Cell>
                            <Cell $w={53} />
                          </SheetRow>
                        );
                      }
                      const bg = r.kind === "green" ? "#00ff00" : r.kind === "dark" ? "#800000" : undefined;
                      const fg = r.kind === "green" ? "#111" : "#fff";
                      return (
                        <SheetRow key={n} $h={r.h}>
                          <RowNum>{n}</RowNum>
                          <Cell $w={95} $bg={bg} $fg={fg}>{r.label}</Cell>
                          <Cell $w={21} $bg={bg} $fg={fg} $align="flex-end">{r.value}</Cell>
                          {r.sel ? <CurrentCell $w={53} /> : <Cell $w={53} />}
                        </SheetRow>
                      );
                    })}
                    <HScroll />
                    <VScroll />
                  </Sheet>
                </SheetBody>
              </SheetWindow>
            </Mdi>
            <SideStrip />
          </MdiRow>
          <TabBar>
            <DocTab $w={122} $active><FcLogo /><span>CadreSublimation_27_07_2024 : 1*</span><TabClose $red>×</TabClose></DocTab>
            <DocTab $w={49}><Spare /><span>Datas*</span><TabClose>×</TabClose></DocTab>
          </TabBar>
          <ScrollLineWrap />
        </Center>
      </Main>
      <StatusBar>
        <StatusMessage>Preselected: CadreSublimation_27_07_2024.Body.Pocket006.Edge14 (77.000000 mm, 0.000000 mm, 23.969013 mm)</StatusMessage>
        <StatusSection $w={47} $pl={7}>
          <svg viewBox="0 0 16 16"><path d="M2 6C4 1 10 1 13 4M14 10C12 15 6 15 3 12" fill="none" stroke="#222" strokeWidth="1.6" /><path d="M12 1 15 5 10 6ZM4 15 1 11 6 10Z" fill="#222" /></svg>
          <span>Gesture</span>
        </StatusSection>
        <StatusSection $w={74} $pl={4}><span>250,28 mm x 195,12 mm</span></StatusSection>
      </StatusBar>
      <TaskBar>
        <StartSlot>
          <svg viewBox="0 0 16 16"><g fill="#35b8f0"><rect x="1" y="1" width="6.6" height="6.6" /><rect x="8.4" y="1" width="6.6" height="6.6" /><rect x="1" y="8.4" width="6.6" height="6.6" /><rect x="8.4" y="8.4" width="6.6" height="6.6" /></g></svg>
        </StartSlot>
        <SearchBox>
          <svg viewBox="0 0 16 16"><circle cx="9" cy="7" r="5" fill="none" stroke="#dde6f0" strokeWidth="1.8" /><path d="M5 11 1.5 14.5" stroke="#dde6f0" strokeWidth="1.8" /></svg>
          <span>Rechercher</span>
          <svg viewBox="0 0 30 13"><path d="M1 11C8 4 12 8 15 3 19 8 24 3 29 9V13H1Z" fill="#b6a892" /><path d="M4 10H28" stroke="#3d5260" strokeWidth="1.4" /><path d="M8 5H9M15 2H16M22 4H23" stroke="#e0a050" /></svg>
        </SearchBox>
        <TaskIcons>
          {taskIcons.map((t, i) => <TaskSlot key={i} $active={t.active} $dot={t.dot}>{t.node}</TaskSlot>)}
        </TaskIcons>
        <Tray>
          <TrayIcons>
            <svg viewBox="0 0 16 16"><path d="M3 10 8 5 13 10" fill="none" stroke="#fff" strokeWidth="1.5" /></svg>
            <svg viewBox="0 0 16 16"><path d="M2 3 8 1 14 3V9C14 12 10 15 8 15 6 15 2 12 2 9Z" fill="#2a8fe0" /><circle cx="11" cy="11" r="3.4" fill="#2fb34c" /></svg>
          </TrayIcons>
          <Lang><span>FRA</span><span>FR</span></Lang>
          <TrayIcons>
            <svg viewBox="0 0 16 16"><path d="M1 3H12V11H1ZM5 14H10M7 11V14" fill="none" stroke="#fff" /><circle cx="13" cy="3" r="2" fill="#123a6e" stroke="#fff" /></svg>
            <svg viewBox="0 0 16 16"><path d="M1 6H4L8 3V13L4 10H1Z" fill="none" stroke="#fff" /><path d="M10 5C12 7 12 9 10 11M12 3C15 6 15 10 12 13" fill="none" stroke="#fff" /></svg>
          </TrayIcons>
          <Clock><span>21:49</span><span>27/07/2024</span></Clock>
        </Tray>
      </TaskBar>
    </Page>
  );
}
